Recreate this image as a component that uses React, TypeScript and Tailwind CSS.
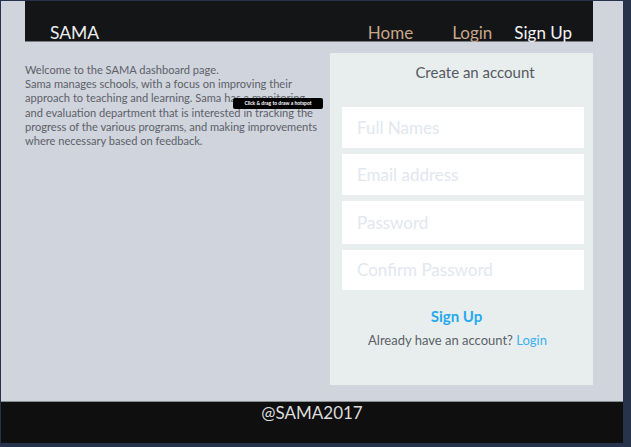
import React from "react";

const fields = [
  { ph: "Full Names", h: "h-[41px]" },
  { ph: "Email address", h: "h-[41px]" },
  { ph: "Password", h: "h-[43px]" },
  { ph: "Confirm Password", h: "h-[40px]" },
];

export default function App() {
  return (
    <div className="relative h-[447px] w-[631px] bg-[#26334a] pb-[4px] pl-[1px] pr-[8px] pt-[1px] font-['Lato',sans-serif]">
      <div className="flex h-full flex-col bg-[#d0d4dc]">
        {/* header */}
        <header className="ml-[24px] mr-[30px] flex h-[41px] items-end justify-between border-b border-[#7a7d80] bg-[#131516]">
          <span className="pl-[25px] text-[17.5px] leading-[17px] text-[#eceff1]">SAMA</span>
          <nav className="flex items-center pr-[21px] text-[17px] leading-[17px]">
            <a className="text-[#c9a68b]">Home</a>
            <a className="ml-[39px] text-[#c9a68b]">Login</a>
            <a className="ml-[22px] text-[#f3f4f6]">Sign Up</a>
          </nav>
        </header>

        <main className="flex flex-1 items-start pl-[24px] pr-[30px] pt-[11px]">
          <div className="w-[298px] pt-[10px] text-[11.1px] leading-[14.2px] text-[#5c6169]">
            Welcome to the SAMA dashboard page.
            <br />
            Sama manages schools, with a focus on improving their approach to teaching and learning. Sama has a monitoring
            and evaluation department that is interested in tracking the progress of the various programs, and making
            improvements where necessary based on feedback.
          </div>

          <section className="ml-auto flex h-[332px] w-[263px] flex-col items-center bg-[#e8eeed] pl-[12px] pr-[9px] pt-[9px]">
            <h2 className="ml-[24px] text-[15px] leading-[20px] text-[#555a62]">Create an account</h2>
            <div className="mt-[25px] flex w-full flex-col gap-[6px]">
              {fields.map((f) => (
                <div key={f.ph} className={`flex ${f.h} items-center bg-white pl-[15px] text-[17px] text-[#e2e7ef]`}>
                  {f.ph}
                </div>
              ))}
            </div>
            <button className="mr-[13px] mt-[16px] text-[15px] font-bold leading-[20px] text-[#26a9f0]">Sign Up</button>
            <p className="mr-[11px] mt-[4px] text-[13px] leading-[20px] text-[#5c6169]">
              Already have an account? <a className="text-[#3cb1f2]">Login</a>
            </p>
          </section>
        </main>

        {/* footer */}
        <footer className="flex h-[42px] justify-center border-t border-[#8a8d90] bg-[#0f0f0f] pt-[1px]">
          <span className="text-[17px] leading-[20px] text-[#dcdcdc]">@SAMA2017</span>
        </footer>
      </div>

      <div className="absolute left-[233px] top-[98px] flex h-[11px] w-[90px] items-center justify-center rounded-[2px] bg-black text-[5px] font-bold text-white">
        Click &amp; drag to draw a hotspot
      </div>
    </div>
  );
}
